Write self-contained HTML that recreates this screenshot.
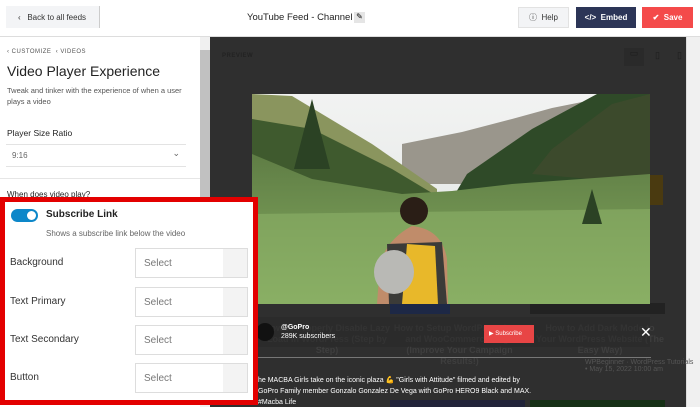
<!DOCTYPE html>
<html><head><meta charset="utf-8"><style>
*{box-sizing:border-box;margin:0;padding:0}
body{width:700px;height:407px;overflow:hidden;font-family:"Liberation Sans",sans-serif;background:#fff;position:relative}
.abs{position:absolute}
.btn{position:absolute;top:7px;height:21px;font-size:8px;display:flex;align-items:center;justify-content:center;font-weight:bold}
.row{position:absolute;left:5px;width:245px;height:32px}
.row .l{position:absolute;left:5px;top:9px;font-size:10px;color:#333}
.row .s{position:absolute;left:130px;top:0;width:113px;height:30px;border:1px solid #ddd;background:#fff;font-size:10px;color:#777;padding:9px 0 0 8px}
.row .s i{position:absolute;right:0;top:0;width:24px;height:28px;background:#f3f3f3}
.ft{position:absolute;color:#3e3e3e;font-size:9px;font-weight:bold;text-align:center;line-height:11px}
</style></head><body>
<div class="abs" style="left:0;top:0;width:700px;height:37px;background:#fff;border-bottom:1px solid #ddd"></div>
<div class="abs" style="left:6px;top:6px;width:94px;height:22px;background:#f3f4f6;border-right:1px solid #ccc;font-size:8px;color:#333;padding:7px 0 0 12px">‹ &nbsp;&nbsp;Back to all feeds</div>
<div class="abs" style="left:247px;top:12px;font-size:9.5px;color:#222">YouTube Feed - Channel</div>
<div class="abs" style="left:354px;top:12px;width:11px;height:11px;background:#e5e5e5;font-size:8px;text-align:center">✎</div>
<div class="btn" style="left:518px;width:51px;background:#f3f4f6;color:#333;border:1px solid #e2e2e2;font-weight:normal">ⓘ&nbsp; Help</div>
<div class="btn" style="left:576px;width:60px;background:#2c3557;color:#fff">&lt;/&gt;&nbsp; Embed</div>
<div class="btn" style="left:642px;width:51px;background:#f44a4a;color:#fff">✔&nbsp; Save</div>
<div class="abs" style="left:0;top:37px;width:200px;height:370px;background:#fff"></div>
<div class="abs" style="left:200px;top:37px;width:10px;height:370px;background:#f0f0f0"></div>
<div class="abs" style="left:200px;top:50px;width:10px;height:150px;background:#c1c1c1"></div>
<div class="abs" style="left:7px;top:49px;font-size:6px;color:#555;letter-spacing:.5px">‹ CUSTOMIZE &nbsp;‹ VIDEOS</div>
<div class="abs" style="left:7px;top:63px;font-size:14px;color:#222">Video Player Experience</div>
<div class="abs" style="left:7px;top:85px;width:190px;font-size:7.5px;color:#555;line-height:11px">Tweak and tinker with the experience of when a user plays a video</div>
<div class="abs" style="left:7px;top:128px;font-size:8.5px;color:#222">Player Size Ratio</div>
<div class="abs" style="left:6px;top:144px;width:180px;height:23px;border-top:1px solid #e3e3e3;border-bottom:1px solid #e3e3e3;font-size:8px;color:#666;padding:6px 0 0 6px">9:16<span style="position:absolute;right:6px;top:3px;font-size:9px">⌄</span></div>
<div class="abs" style="left:0;top:178px;width:200px;border-top:1px solid #e6e6e6"></div>
<div class="abs" style="left:7px;top:190px;font-size:8px;color:#222">When does video play?</div>
<div class="abs" style="left:210px;top:37px;width:476px;height:370px;background:#2f2f2f"></div>
<div class="abs" style="left:686px;top:37px;width:14px;height:370px;background:#f0f0f0;border-left:1px solid #ddd"></div>
<div class="abs" style="left:222px;top:53px;font-size:6px;color:#222;font-weight:bold;letter-spacing:.5px">PREVIEW</div>
<div class="abs" style="left:624px;top:48px;width:20px;height:18px;background:#2a2a2a;color:#1c1c1c;font-size:9px;text-align:center">▭</div>
<div class="abs" style="left:655px;top:50px;color:#1c1c1c;font-size:9px">▯</div>
<div class="abs" style="left:677px;top:50px;color:#1c1c1c;font-size:9px">▯</div>
<div class="abs" style="left:650px;top:175px;width:13px;height:30px;background:#4a3a10"></div>
<div class="abs" style="left:390px;top:303px;width:60px;height:11px;background:#1d2846"></div>
<div class="abs" style="left:530px;top:303px;width:135px;height:11px;background:#222"></div>
<div class="ft" style="left:262px;top:323px;width:130px">How to Properly Disable Lazy Load in WordPress (Step by Step)</div>
<div class="ft" style="left:392px;top:323px;width:135px">How to Setup WordPress Logs and WooCommerce Logs (Improve Your Campaign Results!)</div>
<div class="ft" style="left:535px;top:323px;width:130px">How to Add Dark Mode to Your WordPress Website (The Easy Way)</div>
<div class="abs" style="left:585px;top:359px;font-size:7px;color:#555">WPBeginner · WordPress Tutorials<br>• May 15, 2022 10:00 am</div>
<div class="abs" style="left:256px;top:357px;width:395px;border-top:1px solid #777"></div>
<div class="abs" style="left:258px;top:375px;width:280px;font-size:7px;color:#fff;line-height:11px;white-space:nowrap">he MACBA Girls take on the iconic plaza 💪 "Girls with Attitude" filmed and edited by<br>GoPro Family member Gonzalo Gonzalez De Vega with GoPro HERO9 Black and MAX.<br>#Macba Life</div>
<div class="abs" style="left:390px;top:400px;width:135px;height:7px;background:#22243a"></div>
<div class="abs" style="left:530px;top:400px;width:135px;height:7px;background:#163016"></div>
<svg class="abs" style="left:252px;top:94px" width="398" height="210" viewBox="0 0 398 210">
<defs>
<linearGradient id="sky" x1="0" y1="0" x2="0" y2="1"><stop offset="0" stop-color="#f2f3f2"/><stop offset="1" stop-color="#dfe3e2"/></linearGradient>
<linearGradient id="mead" x1="0" y1="0" x2="0" y2="1"><stop offset="0" stop-color="#5f7d45"/><stop offset="1" stop-color="#86ad60"/></linearGradient>
</defs>
<rect width="398" height="210" fill="url(#sky)"/>
<path d="M150 50 L210 38 L260 25 L300 14 L330 8 L330 90 L150 90Z" fill="#9a968c"/>
<path d="M0 0 L40 2 L120 50 L185 95 L185 150 L0 150Z" fill="#8a955e"/>
<path d="M0 25 L60 35 L140 75 L190 105 L0 140Z" fill="#3f5a2e"/>
<path d="M398 0 L345 0 L280 35 L215 80 L200 105 L398 115Z" fill="#2f4a28"/>
<path d="M398 0 L360 10 L300 55 L280 80 L398 90Z" fill="#4a4a30" opacity=".5"/>
<path d="M0 60 L60 85 L150 100 L200 97 L260 90 L398 80 L398 210 L0 210Z" fill="url(#mead)"/>
<path d="M0 120 L398 115 L398 210 L0 210Z" fill="#8cb168" opacity=".6"/>
<path d="M60 5 L78 75 L42 75Z" fill="#2b4224"/>
<path d="M340 95 L350 130 L330 130Z" fill="#2b4224"/>
<circle cx="162" cy="117" r="14" fill="#2a1e16"/>
<path d="M125 210 L128 170 Q135 145 160 132 Q190 135 195 165 L196 210Z" fill="#c08c6a"/>
<path d="M135 150 L190 148 L195 210 L137 210Z" fill="#3b3b38"/>
<path d="M155 150 L183 152 L186 210 L150 210Z" fill="#e8b82a"/>
<ellipse cx="142" cy="178" rx="20" ry="22" fill="#b9b9b5"/>
</svg>
<div class="abs" style="left:254px;top:317px;width:396px;height:30px;background:rgba(40,40,40,.5)"></div>
<div class="abs" style="left:256px;top:323px;width:18px;height:18px;border-radius:50%;background:#111"></div>
<div class="abs" style="left:281px;top:324px;font-size:7px;color:#fff;font-weight:bold">@GoPro</div>
<div class="abs" style="left:281px;top:333px;font-size:7px;color:#fff">289K subscribers</div>
<div class="abs" style="left:484px;top:325px;width:50px;height:18px;background:#e84545;color:#fff;font-size:6px;padding:5px 0 0 5px">▶ Subscribe</div>
<div class="abs" style="left:640px;top:324px;color:#fff;font-size:14px">✕</div>
<div class="abs" style="left:0;top:197px;width:258px;height:208px;border:5px solid #e30000;background:#fff"></div>
<div class="abs" style="left:11px;top:209px;width:27px;height:13px;border-radius:7px;background:#0d87c9"></div>
<div class="abs" style="left:27px;top:211px;width:9px;height:9px;border-radius:50%;background:#fff"></div>
<div class="abs" style="left:46px;top:209px;font-size:10px;color:#222;font-weight:bold">Subscribe Link</div>
<div class="abs" style="left:46px;top:229px;font-size:8px;color:#666">Shows a subscribe link below the video</div>
<div class="row" style="top:248px"><div class="l">Background</div><div class="s">Select<i></i></div></div>
<div class="row" style="top:287px"><div class="l">Text Primary</div><div class="s">Select<i></i></div></div>
<div class="row" style="top:325px"><div class="l">Text Secondary</div><div class="s">Select<i></i></div></div>
<div class="row" style="top:363px"><div class="l">Button</div><div class="s">Select<i></i></div></div>
</body></html>
